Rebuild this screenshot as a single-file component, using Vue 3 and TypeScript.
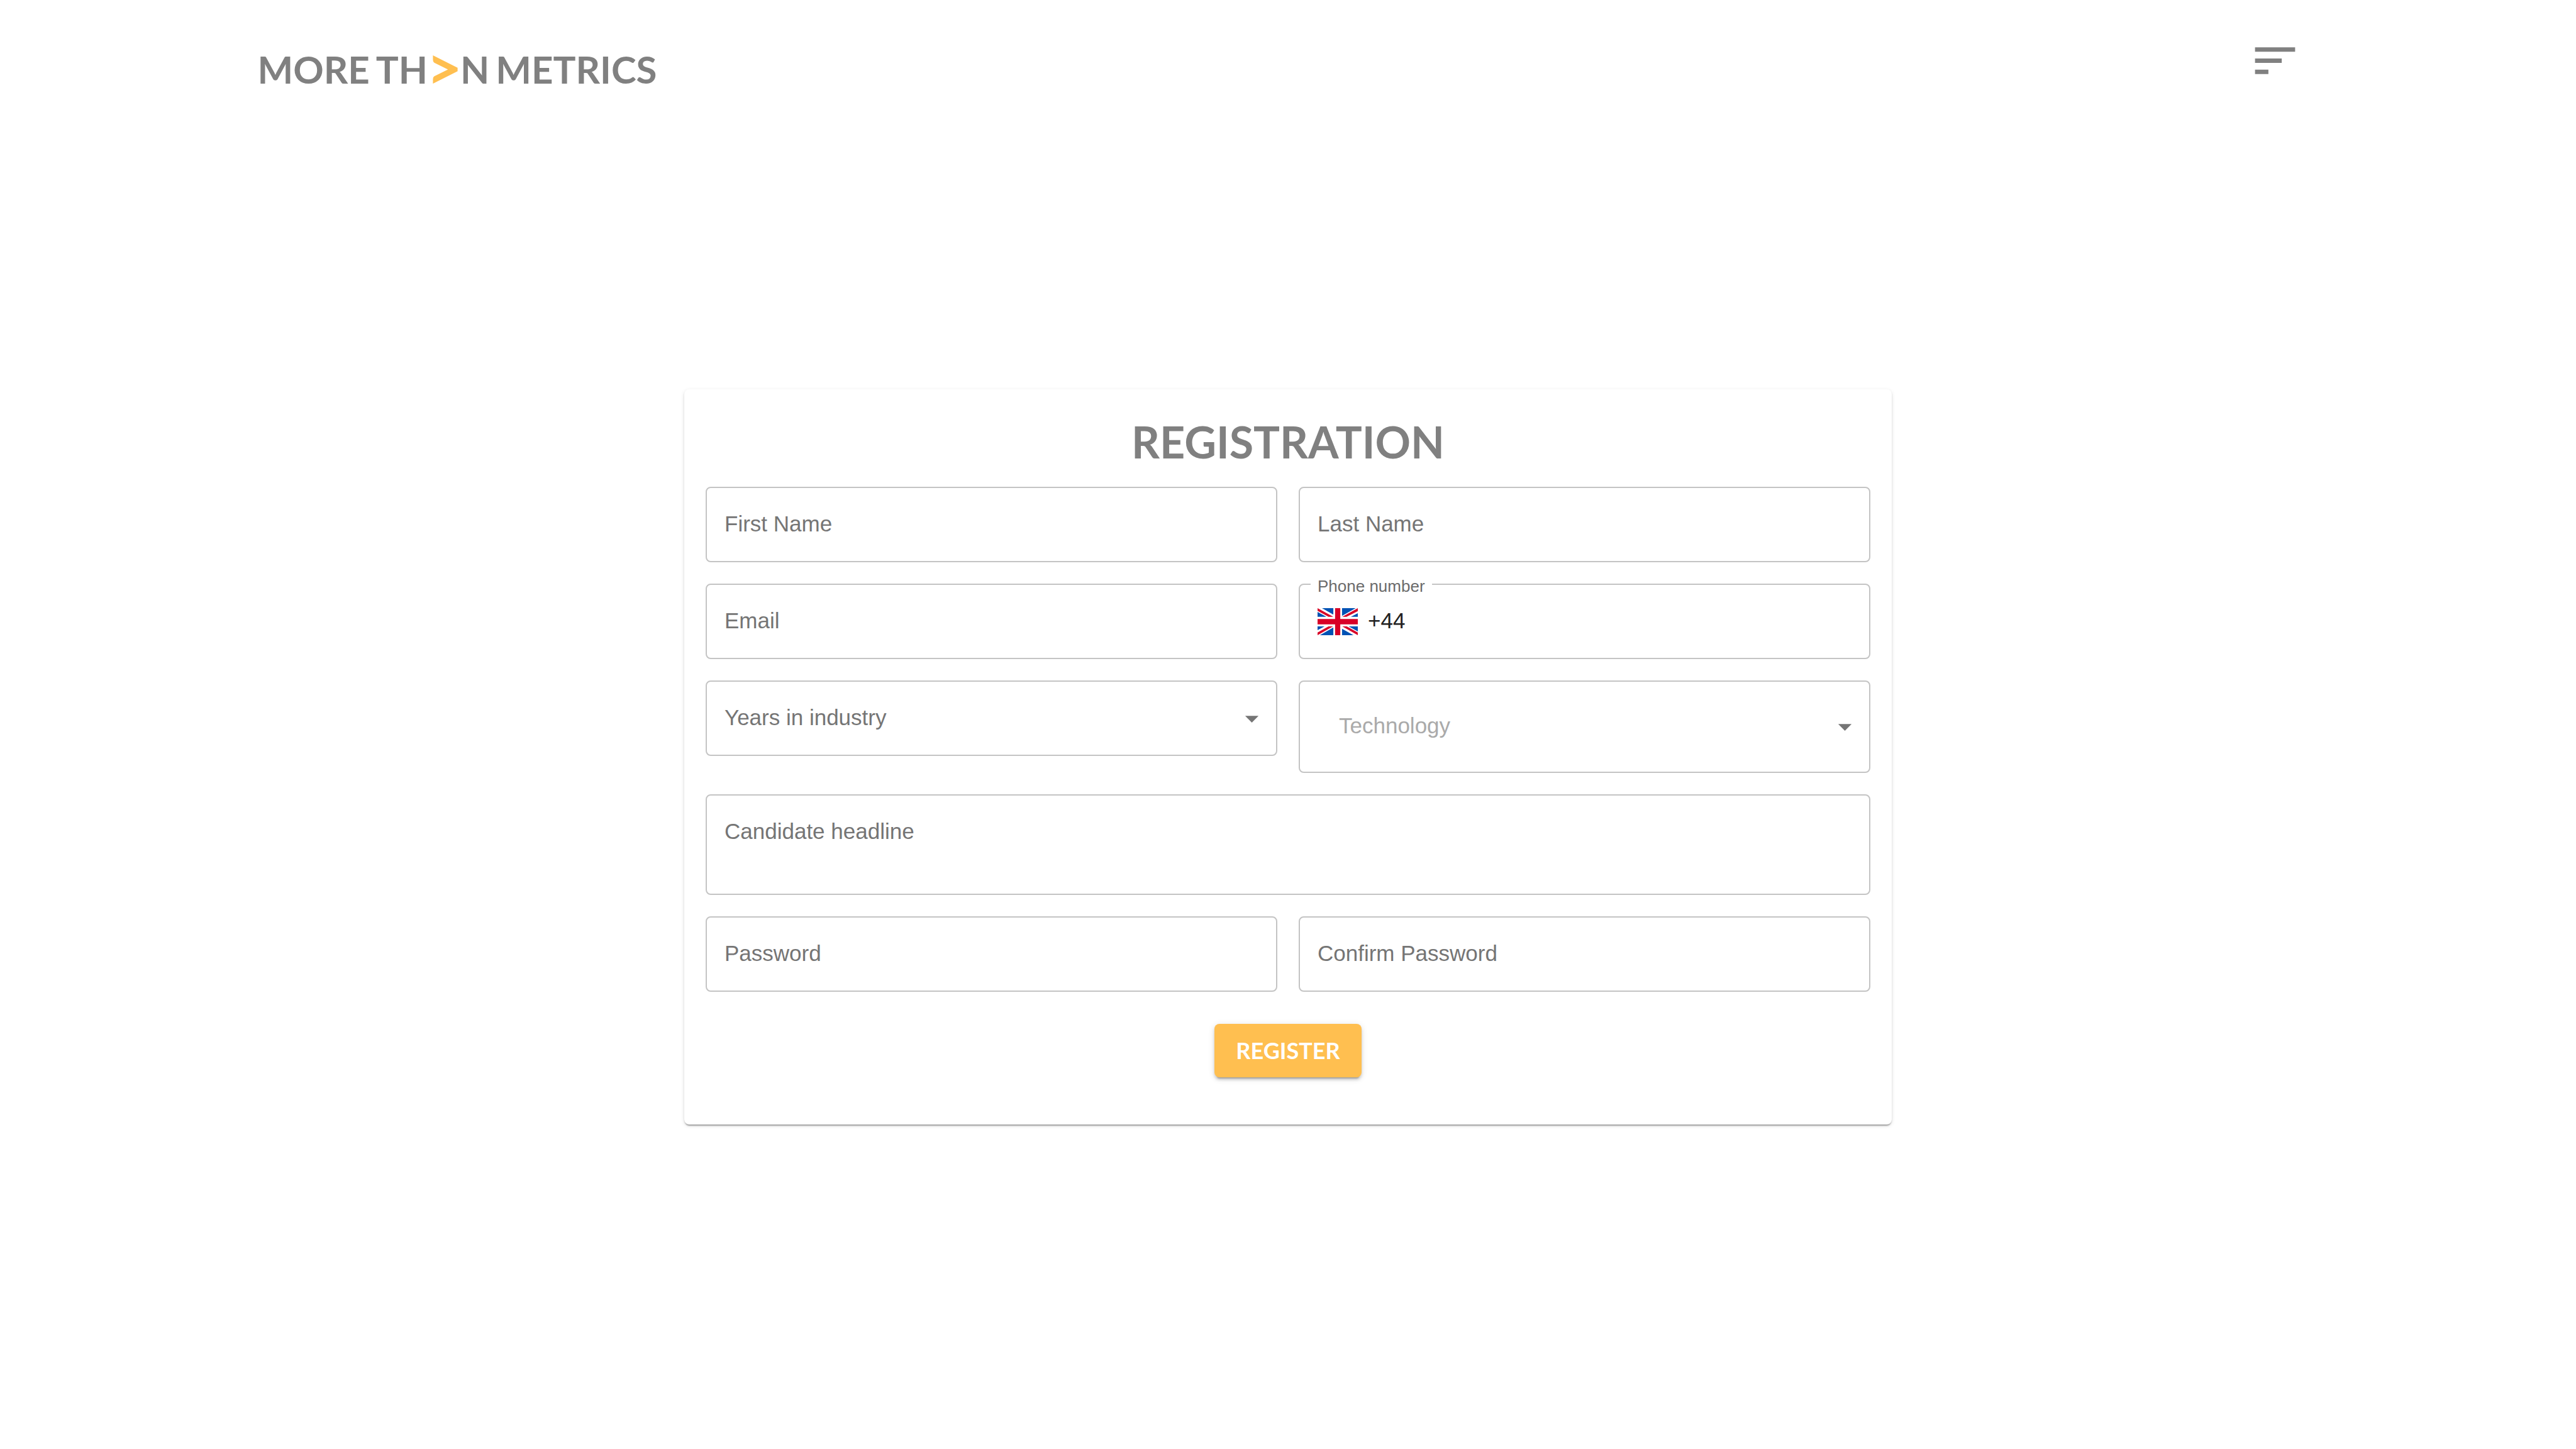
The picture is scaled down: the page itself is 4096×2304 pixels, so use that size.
<script setup lang="ts">
import { reactive } from 'vue'

const form = reactive({
  firstName: '',
  lastName: '',
  email: '',
  phone: '+44',
  years: '',
  technology: '',
  headline: '',
  password: '',
  confirmPassword: '',
})

const yearOptions: string[] = ['0-1', '2-4', '5-9', '10+']
const technologyOptions: string[] = ['JavaScript', 'TypeScript', 'Python', 'Java']
</script>

<template>
  <div class="page">
    <header class="header">
      <a class="logo" href="#" aria-label="More than metrics">
        <span>MORE</span>
        <span>TH<svg class="chevron" viewBox="0 0 74 85" aria-hidden="true"><path d="M0 0L74 37.5V47.5L0 85V72Q0 65 4 63L45 42.5L4 22Q0 19 0 13Z" /></svg>N</span>
        <span>METRICS</span>
      </a>
      <button class="menu" type="button" aria-label="Menu">
        <svg viewBox="0 0 24 24" aria-hidden="true"><path d="M3 18h6v-2H3v2zM3 6v2h18V6H3zm0 7h12v-2H3v2z" /></svg>
      </button>
    </header>

    <main class="main">
      <form class="card" @submit.prevent>
        <h1 class="title">REGISTRATION</h1>

        <div class="fields">
          <div class="field">
            <label for="first-name">First Name</label>
            <input id="first-name" v-model="form.firstName" type="text" />
          </div>
          <div class="field">
            <label for="last-name">Last Name</label>
            <input id="last-name" v-model="form.lastName" type="text" />
          </div>

          <div class="field">
            <label for="email">Email</label>
            <input id="email" v-model="form.email" type="email" />
          </div>
          <div class="field phone">
            <label class="floating" for="phone">Phone number</label>
            <svg class="flag" viewBox="0 0 120 80" preserveAspectRatio="none" aria-hidden="true">
              <path fill="#fff" d="M0 0h120v80H0z" />
              <path
                fill="#0052b4"
                d="M13.3 0H47V19zM0 11.3L26.3 25.7H0zM73 0h40.7L73 22.7zM120 14.7v11H99.3zM0 54h20.7L0 65.3zM47 57.3V80H7zM93 54h27v15zM73 61l34 19H73z"
              />
              <path
                fill="#d80027"
                d="M52.3 0h15.4v32.3H120V48H67.7v32H52.3V48H0V32.3h52.3zM0 0v8l32.7 17.7H47zM120 0v8.7L86.3 25.7H73.7zM0 72l32.7-18h13.6L0 80zM73.7 54H87l33 18v8z"
              />
            </svg>
            <input id="phone" v-model="form.phone" type="tel" />
          </div>

          <div class="field">
            <label for="years">Years in industry</label>
            <select id="years" v-model="form.years">
              <option value=""></option>
              <option v-for="option in yearOptions" :key="option" :value="option">{{ option }}</option>
            </select>
            <svg class="arrow" viewBox="0 0 24 24" aria-hidden="true"><path d="M7 10l5 5 5-5z" /></svg>
          </div>
          <div class="field technology">
            <label for="technology">Technology</label>
            <select id="technology" v-model="form.technology">
              <option value=""></option>
              <option v-for="option in technologyOptions" :key="option" :value="option">{{ option }}</option>
            </select>
            <svg class="arrow" viewBox="0 0 24 24" aria-hidden="true"><path d="M7 10l5 5 5-5z" /></svg>
          </div>

          <div class="field headline">
            <label for="headline">Candidate headline</label>
            <textarea id="headline" v-model="form.headline"></textarea>
          </div>

          <div class="field">
            <label for="password">Password</label>
            <input id="password" v-model="form.password" type="password" />
          </div>
          <div class="field">
            <label for="confirm-password">Confirm Password</label>
            <input id="confirm-password" v-model="form.confirmPassword" type="password" />
          </div>
        </div>

        <button class="submit" type="submit">REGISTER</button>
      </form>
    </main>
  </div>
</template>

<style>
body {
  background: #fff;
}
</style>

<style scoped>
.page,
.page * {
  box-sizing: border-box;
}

.page {
  display: flex;
  flex-direction: column;
  min-height: 100vh;
  font-family: 'Liberation Sans', Arial, sans-serif;
  font-size: 35px;
}

.header {
  display: flex;
  justify-content: space-between;
  align-items: flex-start;
  padding: 28px 10%;
}

.logo {
  display: flex;
  align-items: baseline;
  gap: 10px;
  padding-top: 44px;
  font-family: Lato, sans-serif;
  font-size: 60px;
  font-weight: 700;
  line-height: 76px;
  color: #808080;
  text-decoration: none;
  white-space: nowrap;
}

.chevron {
  width: 40px;
  height: 45px;
  margin: 0 4px 0 8px;
  fill: #ffbf50;
}

.menu {
  display: flex;
  padding: 26px;
  border: 0;
  background: none;
}

.menu svg {
  width: 85px;
  height: 85px;
  fill: #808080;
}

.main {
  flex: 1;
  display: flex;
  align-items: center;
  justify-content: center;
  padding-bottom: 90px;
}

.card {
  display: flex;
  flex-direction: column;
  width: 100%;
  max-width: 1920px;
  padding: 34px 34px 75px;
  border-radius: 8px;
  background: #fff;
  box-shadow:
    0 4px 2px -2px rgba(0, 0, 0, 0.2),
    0 2px 2px 0 rgba(0, 0, 0, 0.14),
    0 2px 6px 0 rgba(0, 0, 0, 0.12);
}

.title {
  margin: 0 0 23px;
  font-family: Lato, sans-serif;
  font-size: 70px;
  font-weight: 700;
  line-height: 98px;
  text-align: center;
  color: #808080;
}

.fields {
  display: grid;
  grid-template-columns: 1fr 1fr;
  align-items: start;
  gap: 34px;
}

.field {
  position: relative;
  display: grid;
  grid-template-columns: minmax(0, 1fr);
  min-height: 120px;
  border: 2px solid #c4c4c4;
  border-radius: 8px;
}

.field > * {
  grid-row: 1;
  grid-column: 1;
}

.field label {
  align-self: center;
  justify-self: start;
  padding: 0 28px 3px;
  color: #757575;
  pointer-events: none;
}

.field input,
.field select,
.field textarea {
  width: 100%;
  min-width: 0;
  margin: 0;
  padding: 0 28px 3px;
  border: 0;
  outline: 0;
  background: none;
  font: inherit;
  color: #212121;
  appearance: none;
  resize: none;
}

.arrow {
  align-self: center;
  justify-self: end;
  width: 51px;
  height: 51px;
  margin-right: 13px;
  fill: #757575;
  pointer-events: none;
}

.phone {
  grid-template-columns: auto minmax(0, 1fr);
}

.phone .flag {
  align-self: center;
  width: 64px;
  height: 43px;
  margin-left: 28px;
}

.phone input {
  grid-column: 2;
  padding-left: 16px;
}

.field .floating {
  position: absolute;
  top: -11px;
  left: 17px;
  padding: 0 11px;
  font-size: 26px;
  line-height: 26px;
  color: #6b6b6b;
  background: #fff;
}

.technology {
  min-height: 147px;
}

.technology label {
  padding: 0 62px 3px;
  color: #aaa;
}

.headline {
  grid-column: span 2;
  min-height: 160px;
}

.headline label {
  align-self: start;
  padding-top: 37px;
}

.headline textarea {
  padding-top: 37px;
}

.submit {
  align-self: center;
  height: 85px;
  margin-top: 51px;
  padding: 0 34px 2px;
  border: 0;
  border-radius: 8px;
  background: #ffbf50;
  box-shadow:
    0 6px 2px -4px rgba(0, 0, 0, 0.2),
    0 4px 4px 0 rgba(0, 0, 0, 0.14),
    0 2px 11px 0 rgba(0, 0, 0, 0.12);
  font-family: Lato, sans-serif;
  font-size: 36px;
  font-weight: 700;
  color: #fff;
}
</style>
